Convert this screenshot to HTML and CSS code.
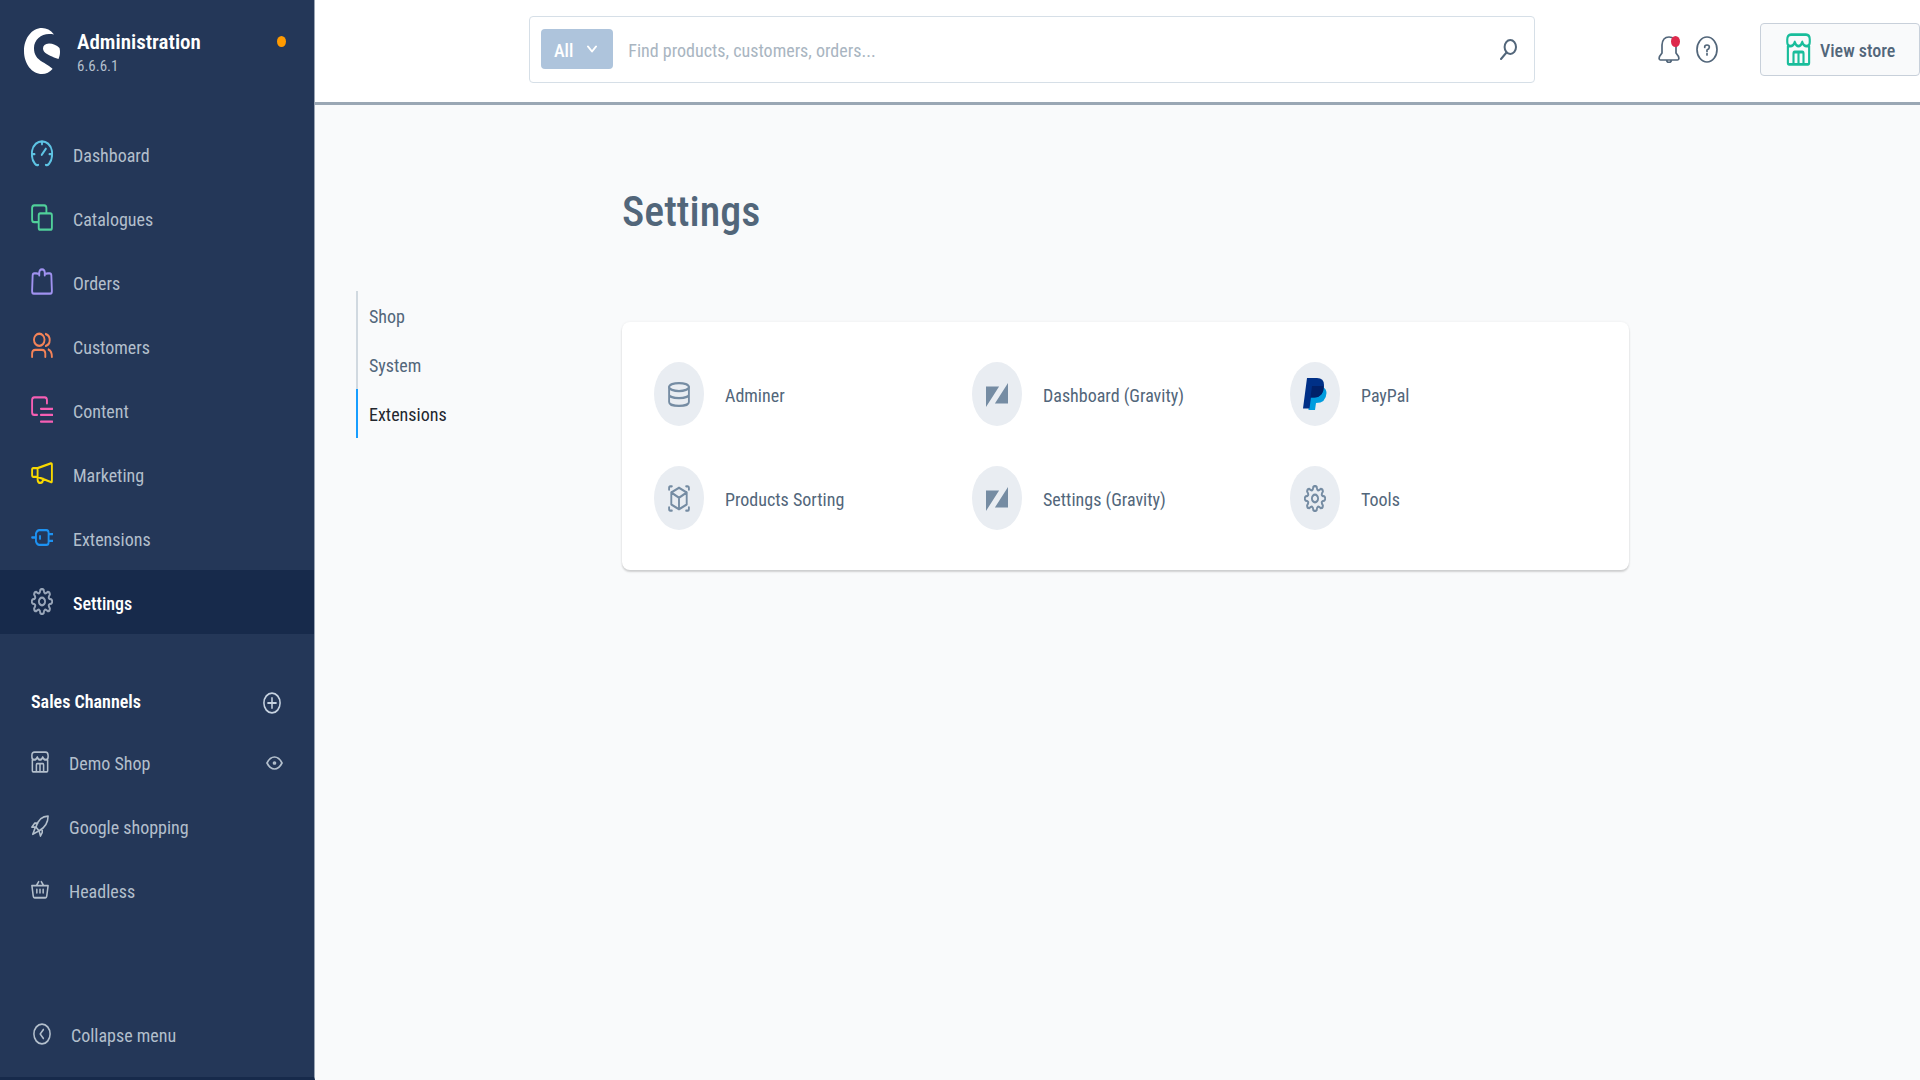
FILE: index.html
```html
<!DOCTYPE html>
<html lang="en">
<head>
<meta charset="utf-8">
<title>Settings | Administration</title>
<link rel="stylesheet" href="styles.css">
</head>
<body>
<svg class="sprite" aria-hidden="true">
  <symbol id="gear" viewBox="-10 -10 20 20" preserveAspectRatio="none">
    <path d="M-1.56-8.6Q0-10 1.56-8.6Q1.84-4.44 5.16-7.2Q7.2-7.2 7.2-5.16Q4.44-1.84 8.6-1.56Q10 0 8.6 1.56Q4.44 1.84 7.2 5.16Q7.2 7.2 5.16 7.2Q1.84 4.44 1.56 8.6Q0 10-1.56 8.6Q-1.84 4.44-5.16 7.2Q-7.2 7.2-7.2 5.16Q-4.44 1.84-8.6 1.56Q-10 0-8.6-1.56Q-4.44-1.84-7.2-5.16Q-7.2-7.2-5.16-7.2Q-1.84-4.44-1.56-8.6Z"/>
    <circle r="2.8"/>
  </symbol>
  <symbol id="shop" viewBox="0 0 20 20" preserveAspectRatio="none">
    <path d="M1 4Q1 1 4 1H16Q19 1 19 4V5.500Q19 8 16.500 8Q14 8 13 5.500Q12 8 10 8Q8 8 7 5.500Q6 8 3.500 8Q1 8 1 5.500ZM1.500 8V18Q1.500 19 2.500 19H17.500Q18.500 19 18.500 18V8M6 19V12.500Q6 11.500 7 11.500H13Q14 11.500 14 12.500V19M10 12V19"/>
  </symbol>
  <symbol id="gravity" viewBox="0 0 21 24" preserveAspectRatio="none">
    <path d="M0 3.500H12.500L0 24ZM21 0V20.500H8.500Z" fill="currentColor" stroke="none"/>
  </symbol>
</svg>
<div class="app">
  <aside class="sidebar">
    <header class="brand">
      <svg class="logo" viewBox="0 0 36 46" preserveAspectRatio="none" aria-hidden="true">
        <path d="M30 6.500C26.500 2 22.500 0 18 0C8 0 0 10 0 23C0 36 8 46 18 46C22 46 26 44 28.500 41C28.500 40 23.500 37 18.500 34C13 30.500 10 27 10 20C10 12 17 6 25 6C27 6 28.500 6.300 30 6.500Z"/>
        <path d="M34.500 31L35.500 28Q36.500 24 35.500 20Q31 15.500 25 15.500Q19 16 19 20.500C19 25 25 27 30 29.500Z"/>
      </svg>
      <div class="brand-text">
        <span class="brand-name">Administration</span>
        <span class="version">6.6.6.1</span>
      </div>
      <span class="status-dot"></span>
    </header>
    <nav class="menu" aria-label="Main">
      <a class="item" href="#"><svg class="icon c-dashboard" viewBox="0 0 20 20" preserveAspectRatio="none"><path d="M6.500 18.500Q5 19 3.500 17.500C.5 14.500.5 11 1 8C2 3.500 6 1 10 1S18 3.500 19 8C19.500 11 19.500 14.500 16.500 17.500Q15 19 13.500 18.500M10 1V3.200M1 10.500H3.200M16.800 10.500H19M9.800 11L13.500 6.500"/></svg><span>Dashboard</span></a>
      <a class="item" href="#"><svg class="icon c-catalogue" viewBox="0 0 20 20" preserveAspectRatio="none"><path d="M6.500 13.500H3Q1 13.500 1 11.500V3Q1 1 3 1H12Q14 1 14 3V6.500"/><rect x="7" y="7" width="12" height="12" rx="1.500"/></svg><span>Catalogues</span></a>
      <a class="item" href="#"><svg class="icon c-order" viewBox="0 0 20 20" preserveAspectRatio="none"><path d="M5 4H3Q1.600 4 1.500 5.500L1 17Q1 19 2.500 19H17.500Q19 19 19 17L18.500 5.500Q18.400 4 17 4H15M5.500 4.200H7.500V3.500Q7.500 1 10 1T12.500 3.500V4.200H14.500M7.500 4V5.500M12.500 4V5.500"/></svg><span>Orders</span></a>
      <a class="item" href="#"><svg class="icon c-customer" viewBox="0 0 20 20" preserveAspectRatio="none"><ellipse cx="7.500" cy="5.800" rx="4.800" ry="4.500"/><path d="M13.500 1.500Q17 2.500 17 6T13.500 10.300M1 18.500V16Q1 13.300 4 13.300H10Q13 13.300 13 16V18.500M16 13Q19 14 19 18.500"/></svg><span>Customers</span></a>
      <a class="item" href="#"><svg class="icon c-content" viewBox="0 0 20 20" preserveAspectRatio="none"><path d="M5.500 14H3Q1 14 1 12V3Q1 1 3 1H12.500Q14.500 1 14.500 3V5.500M9 9.500H19.500M9 14H19.500M9 19H19.500"/></svg><span>Content</span></a>
      <a class="item" href="#"><svg class="icon c-marketing" viewBox="0 0 20 20" preserveAspectRatio="none"><path d="M6 6L18 2.500Q19 2.300 19 3.500V15.500Q19 16.700 18 16.300L6 12.500ZM6 6H2Q1 6 1 7V11.500Q1 12.500 2 12.500H6M6 12.500V14.500Q6.200 17 8.500 17Q11 16.800 11 14"/></svg><span>Marketing</span></a>
      <a class="item" href="#"><svg class="icon c-extension" viewBox="0 0 20 20" preserveAspectRatio="none"><path d="M1 10H4.500M4.500 7Q5.500 4.500 7.500 4.500H14Q16 4.500 16 6.500V13.500Q16 15.500 14 15.500H7.500Q5.500 15.500 4.500 13ZM16 7.500H19.500M16 12.500H19.500M8.200 9V11"/></svg><span>Extensions</span></a>
      <a class="item active" href="#" aria-current="page"><svg class="icon c-settings"><use href="#gear"/></svg><span>Settings</span></a>
    </nav>
    <section class="channels">
      <div class="channels-head">
        <h2>Sales Channels</h2>
        <button class="bare add" type="button" aria-label="Add sales channel"><svg class="small-icon" viewBox="0 0 20 20" preserveAspectRatio="none"><circle cx="10" cy="10" r="9"/><path d="M10 5.500V14.500M5.500 10H14.500"/></svg></button>
      </div>
      <a class="item channel" href="#"><svg class="small-icon"><use href="#shop"/></svg><span>Demo Shop</span>
        <svg class="eye" viewBox="0 0 17 14" preserveAspectRatio="none"><path d="M1 7Q4 1 8.500 1T16 7Q13 13 8.500 13T1 7Z"/><circle cx="8.500" cy="7" r="1"/></svg></a>
      <a class="item channel" href="#"><svg class="small-icon" viewBox="0 0 20 20" preserveAspectRatio="none"><path d="M5.500 11C8 4 13 1 19 1C19 7 15.500 11.500 9 14.500ZM7.500 7.500L4 7.500L1 11L5.500 11M12.500 12.500V16L10.500 19L9 14.500M4.500 12L2 17.500L7.500 15"/></svg><span>Google shopping</span></a>
      <a class="item channel" href="#"><svg class="small-icon" viewBox="0 0 20 20" preserveAspectRatio="none"><path d="M1 6H19L17.500 15.500Q17.300 17 16 17H4Q2.700 17 2.500 15.500ZM6 6L8.500 2.500M14 6L11.500 2.500M6.500 9.500V12.500M10 9.500V12.500M13.500 9.500V12.500"/></svg><span>Headless</span></a>
    </section>
    <button class="bare collapse" type="button"><svg class="small-icon" viewBox="0 0 20 20" preserveAspectRatio="none"><circle cx="10" cy="10" r="9"/><path d="M11.500 6L8 10L11.500 14"/></svg><span>Collapse menu</span></button>
  </aside>

  <div class="page">
    <header class="topbar">
      <form class="search">
        <button class="scope" type="button"><span>All</span><svg viewBox="0 0 10 8" preserveAspectRatio="none"><path d="M1 1.500L5 6.500L9 1.500"/></svg></button>
        <input type="text" aria-label="Search" placeholder="Find products, customers, orders...">
        <button class="bare" type="submit" aria-label="Search"><svg class="magnifier" viewBox="0 0 17 21" preserveAspectRatio="none"><ellipse cx="10.300" cy="8" rx="5.700" ry="7"/><path d="M6.500 13.500L1 20"/></svg></button>
      </form>
      <div class="tools">
        <button class="bare bell" type="button" aria-label="Notifications"><svg class="icon" viewBox="0 0 22 27" preserveAspectRatio="none"><path d="M4 17V9Q4.500 1 11 1T18 9V17L20.500 20.500Q21.500 24 19.500 24H2.500Q.5 24 1.500 20.500ZM8.500 24Q9 26.500 11 26.500T13.500 24"/></svg><span class="badge"></span></button>
        <button class="bare" type="button" aria-label="Help"><svg class="icon" viewBox="0 0 22 27" preserveAspectRatio="none"><ellipse cx="11" cy="13.500" rx="10" ry="12.500"/><path d="M8.700 11.500Q8.500 9 11 9T13.300 11.300Q13.300 13 11 14V15.500M11 17.500V19"/></svg></button>
      </div>
      <button class="store" type="button"><svg><use href="#shop"/></svg><span>View store</span></button>
    </header>
    <main class="content">
      <h1>Settings</h1>
      <nav class="tabs" aria-label="Settings groups">
        <a href="#">Shop</a>
        <a href="#">System</a>
        <a class="current" href="#">Extensions</a>
      </nav>
      <section class="card">
        <a class="tile" href="#"><span class="disc"><svg class="icon" viewBox="0 0 20 20" preserveAspectRatio="none"><ellipse cx="10" cy="4.500" rx="9" ry="3"/><path d="M1 4.500V15.500C1 19.500 19 19.500 19 15.500V4.500M1 10C1 13.500 19 13.500 19 10"/></svg></span><span class="label">Adminer</span></a>
        <a class="tile" href="#"><span class="disc"><svg class="icon"><use href="#gravity" y="2" height="24"/></svg></span><span class="label">Dashboard (Gravity)</span></a>
        <a class="tile" href="#"><span class="disc"><svg class="paypal" viewBox="0 0 24 32" preserveAspectRatio="none"><path d="M7 8L5.500 32H12L13 25Q23 25 23.500 15Q23.500 11 20 9Z" fill="#009cde"/><path d="M4 0H14Q21 0 21 7Q21 19 11 19.500H8L6.500 30.500H0Z" fill="#003087"/><path d="M9 8H20.500Q21 19 11.500 19.500H7.500Z" fill="#012169"/></svg></span><span class="label">PayPal</span></a>
        <a class="tile" href="#"><span class="disc"><svg class="icon" viewBox="0 0 20 20" preserveAspectRatio="none"><path d="M10 2L17 5.500V14.500L10 18L3 14.500V5.500ZM3 5.500L10 9.500L17 5.500M10 9.500V18M1 3.500V2Q1 1 2 1H3.500M16.500 1H18Q19 1 19 2V3.500M19 16.500V18Q19 19 18 19H16.500M3.500 19H2Q1 19 1 18V16.500"/></svg></span><span class="label">Products Sorting</span></a>
        <a class="tile" href="#"><span class="disc"><svg class="icon"><use href="#gravity" y="2" height="24"/></svg></span><span class="label">Settings (Gravity)</span></a>
        <a class="tile" href="#"><span class="disc"><svg class="icon"><use href="#gear"/></svg></span><span class="label">Tools</span></a>
      </section>
    </main>
  </div>
</div>
</body>
</html>
```
FILE: styles.css
```css
* { box-sizing: border-box; }

body {
  margin: 0;
  font: 18px/24px "Roboto Condensed", "Liberation Sans Narrow", Inter, sans-serif;
  color: #52667a;
  background: #f9fafb;
}

a { color: inherit; text-decoration: none; }
h1, h2 { margin: 0; }
button, input { font: inherit; color: inherit; }
svg { display: block; flex: none; fill: none; stroke: currentColor; stroke-width: 1.7; stroke-linecap: round; stroke-linejoin: round; }

.sprite { position: absolute; width: 0; height: 0; }
.bare { display: flex; align-items: center; padding: 0; border: 0; background: none; }
.icon { width: 22px; height: 27px; }
.small-icon { width: 18px; height: 22px; }

.app { display: flex; min-height: 100vh; }

/* Sidebar */
.sidebar {
  display: flex;
  flex-direction: column;
  flex: none;
  width: 315px;
  padding-bottom: 11px;
  color: #b3bfcc;
  background: #243758;
  border-right: 1px solid #9aa5b4;
  border-bottom: 3px solid #172a4b;
}

.brand { display: flex; height: 121px; padding: 28px 28px 0 24px; }
.logo { width: 36px; height: 46px; fill: #fff; stroke: none; }
.brand-text { display: flex; flex-direction: column; flex: 1; padding-left: 17px; }
.brand-name { font-size: 21px; line-height: 28px; font-weight: 600; color: #fff; }
.version { font-size: 15px; line-height: 20px; }
.status-dot { width: 9px; height: 11px; margin-top: 8px; border-radius: 50%; background: #ff9a00; }

.menu { padding-top: 1px; }
.item { display: flex; align-items: center; gap: 20px; height: 64px; padding: 0 31px; }
.item span, .collapse span { padding-top: 3px; }
.item svg { margin-bottom: 1px; }
.item.active { font-weight: 500; color: #fff; background: #172a4b; }
.c-dashboard { color: #5ec4e4; }
.c-catalogue { color: #50d09a; }
.c-order { color: #a092f0; }
.c-customer { color: #f48358; }
.c-content { color: #f65fb4; }
.c-marketing { color: #f8d800; }
.c-extension { color: #1d92f2; }
.c-settings { color: #98a5b8; }

.channels { padding-top: 44px; }
.channels-head { display: flex; justify-content: space-between; height: 52px; padding: 12px 33px 0 31px; }
.channels-head h2 { font-size: 18px; line-height: 24px; font-weight: 600; color: #fff; }
.add { height: 26px; color: #c6d2e0; }
.item .eye { width: 17px; height: 14px; margin: 2px 0 0 auto; }

.collapse { gap: 20px; height: 64px; margin-top: auto; padding: 0 33px; }

/* Top bar */
.page { flex: 1; min-width: 0; }
.topbar { display: flex; align-items: center; height: 105px; padding: 0 0 4px 214px; background: #fff; border-bottom: 3px solid #9aa7b4; }
.search { display: flex; align-items: center; flex: 1; height: 67px; padding: 0 17px 0 11px; background: #fff; border: 1px solid #d6dfe7; border-radius: 4px; }
.scope { display: flex; align-items: center; gap: 14px; height: 40px; padding: 0 16px 0 13px; color: #fff; background: #aec4dc; border: 0; border-radius: 4px; font-weight: 500; }
.scope span, .store span { padding-top: 3px; }
.scope svg { width: 10px; height: 8px; stroke-width: 2px; }
.search input { flex: 1; min-width: 0; padding: 3px 0 0 15px; border: 0; outline: 0; background: none; }
.search input::placeholder { color: #a9b5c1; opacity: 1; }
.magnifier { width: 17px; height: 21px; stroke-width: 2px; }

.tools { display: flex; gap: 16px; margin: 0 42px 0 123px; }
.bell { position: relative; }
.badge { position: absolute; top: 0; right: 0; width: 9px; height: 11px; border-radius: 50%; background: #de294c; }
.store { display: flex; align-items: center; gap: 9px; width: 160px; height: 53px; padding: 0 0 0 25px; font-weight: 500; background: #f9fafb; border: 1px solid #c8d0da; border-radius: 4px; }
.store svg { width: 25px; height: 33px; color: #19bd9b; }

/* Settings page */
.content {
  display: grid;
  grid-template-columns: 266px minmax(0, 1fr);
  align-items: start;
  padding: 81px 291px 40px 41px;
}
.content h1 { grid-column: 2; font-size: 42px; line-height: 52px; font-weight: 500; }
.tabs { display: flex; flex-direction: column; grid-column: 1; justify-self: start; margin-top: 53px; }
.tabs a { padding: 14px 11px 11px; border-left: 2px solid #d1d9e0; }
.tabs .current { color: #23272e; border-color: #189eff; }

.card {
  display: grid;
  grid-template-columns: repeat(3, minmax(0, 1fr));
  gap: 40px 12px;
  margin-top: 84px;
  padding: 40px 33px 40px 32px;
  background: #fff;
  border-radius: 8px;
  box-shadow: 0 2px 2px rgba(0, 0, 0, .16), 0 0 3px rgba(0, 0, 0, .06);
}
.tile { display: flex; align-items: center; gap: 21px; }
.label { padding-top: 3px; }
.disc { display: flex; align-items: center; justify-content: center; flex: none; width: 50px; height: 64px; border-radius: 50%; color: #758ca3; background: #e9edf2; }
.paypal { width: 24px; height: 32px; stroke: none; }
```
